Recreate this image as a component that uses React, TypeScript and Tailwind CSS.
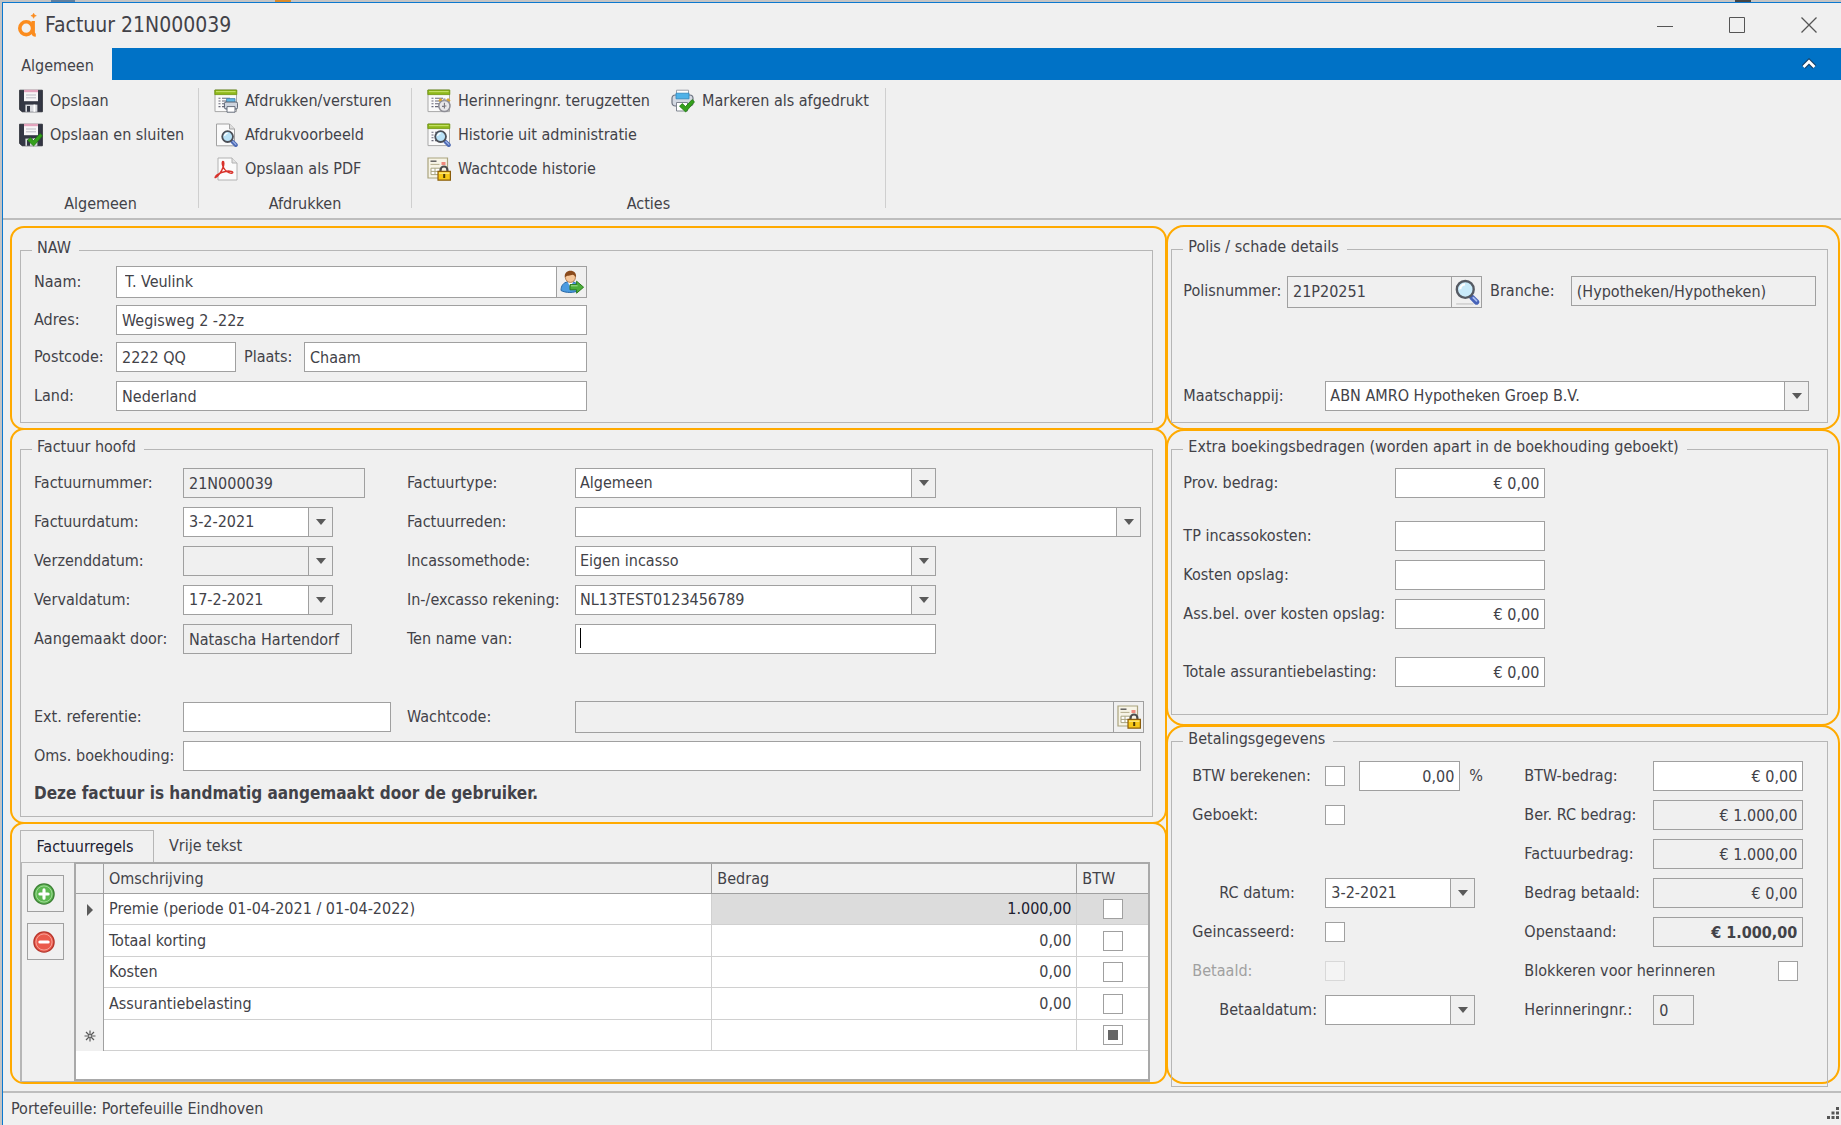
import { useId, type ReactNode } from "react";

/* ---------- icons ---------- */

function Svg({ children, size = "size-6" }: { children: ReactNode; size?: string }) {
  return (
    <svg viewBox="0 0 24 24" className={`${size} shrink-0`} fill="none" aria-hidden="true">
      {children}
    </svg>
  );
}

const CheckShape = () => (
  <path d="M8.5 17.2l2.8-2.6 3.2 3 6.6-7 2.4 2.2-8.8 10.2z" fill="#35a01c" stroke="#1f7a10" strokeWidth=".8" strokeLinejoin="round" />
);

const FloppyShape = () => (
  <>
    <path d="M.6 1.2h22.8v21.6H3L.6 20.4z" fill="#343744" stroke="#20222b" strokeWidth=".8" strokeLinejoin="round" />
    <path d="M5 .8h14v11.4H5z" fill="#f7f5f7" />
    <path d="M5 .8h14v2.4H5z" fill="#e3a3bd" />
    <path d="M7 6h10M7 8.8h10" stroke="#b9b9c2" strokeWidth="1" />
    <path d="M6.4 15.6h12v7.2h-12z" fill="#d9dadf" />
    <path d="M8 17h3v5.8H8z" fill="#343744" />
    <path d="M14.5 15.6h1.8v7.2h-1.8z" fill="#fff" />
  </>
);

const FormShape = () => (
  <>
    <path d="M1 1h21.5v21.6H1z" fill="#fafafa" stroke="#a7a7a7" />
    <path d="M.8 1h22v4.6H.8z" fill="#8fb81c" stroke="#6f9410" strokeWidth=".8" />
    <path d="M2 2.6h19.6" stroke="#c3df63" strokeWidth="1.2" />
    <path d="M4.5 9.2h2M8 9.2h8M4.5 12h2M8 12h5M4.5 14.8h2M8 14.8h5M4.5 17.6h2M8 17.6h5" stroke="#686878" strokeWidth="1.1" />
  </>
);

const LensShape = () => (
  <>
    <path d="M18.4 18.6l3.4 3.4" stroke="#4f6cb5" strokeWidth="4" strokeLinecap="round" />
    <path d="M18.8 18.4l3 3" stroke="#9db4e8" strokeWidth="1.2" strokeLinecap="round" />
    <circle cx="13.6" cy="13.6" r="5.4" fill="#b9e2f7" stroke="#4b4f57" strokeWidth="1.8" />
    <path d="M10.6 13a3 3 0 0 1 3-2.6" stroke="#fff" strokeWidth="1.2" />
  </>
);

const NoteLockShape = () => (
  <>
    <path d="M1 1h19.5v20H1z" fill="#f7f4e6" stroke="#aaa37e" strokeWidth="1.2" />
    <path d="M3.5 4.2h6" stroke="#555" strokeWidth="1.4" />
    <path d="M3.5 7.4h9" stroke="#b5ae8c" />
    <path d="M14.5 5h4v3h-4z" fill="#f0897c" />
    <path d="M4 11.2h9v6.4H4zM4 14.4h9M8 11.2v6.4" stroke="#a9a480" strokeWidth="1" fill="#fff" />
    <path d="M13.6 15.5v-2.6a3.4 3.4 0 0 1 6.8 0v2.6" stroke="#4c4c4c" strokeWidth="2.2" />
    <path d="M11 14.4h12.4v8.8H11z" fill="#f7c818" stroke="#8a5d0c" strokeWidth="1.2" />
    <path d="M12 16.2h10.4" stroke="#fdea8a" strokeWidth="1.2" />
    <path d="M17.2 17v4" stroke="#4c3a05" strokeWidth="2" />
  </>
);

const SaveIcon = () => <Svg><FloppyShape /></Svg>;
const SaveCloseIcon = () => <Svg><FloppyShape /><CheckShape /></Svg>;
const NoteLockIcon = () => <Svg><NoteLockShape /></Svg>;
const HistoryIcon = () => <Svg><FormShape /><LensShape /></Svg>;

const PrintSendIcon = () => (
  <Svg>
    <FormShape />
    <path d="M12.6 9.6h8.4v5h-8.4z" fill="#62b6e4" stroke="#3f7fa8" strokeWidth=".8" />
    <rect x="10.4" y="13" width="13.2" height="7" rx="1.6" fill="#cfd5df" stroke="#59616f" />
    <path d="M13 17.6h8v5.6h-8z" fill="#fff" stroke="#59616f" strokeWidth=".9" />
  </Svg>
);

const PreviewIcon = () => (
  <Svg>
    <path d="M2.5 1h13l5 5v16.8h-18z" fill="#fafafa" stroke="#a2a2a2" />
    <path d="M15.5 1v5h5" fill="#ddd" stroke="#a2a2a2" />
    <LensShape />
  </Svg>
);

const PdfIcon = () => (
  <Svg>
    <path d="M4 1h14l5 5v17H4z" fill="#fbfbfb" stroke="#b2b2b2" />
    <path d="M18 1v5h5" fill="#e3e3e3" stroke="#b2b2b2" />
    <path d="M1.4 20.6c2.6-1 6.2-6 7.8-10.6.8-2.6.9-5.4-.2-5.4-1.3 0-.8 4.6 1.6 7.8 2.2 2.8 6.8 4.8 8 3.4.9-1.3-2.6-2-6-1.6-4 .4-7.2 1.8-9.4 3.6-1.7 1.4-2.5 3-1.8 2.8z" stroke="#d8322b" strokeWidth="1.5" strokeLinejoin="round" />
  </Svg>
);

const ClockFormIcon = () => (
  <Svg>
    <FormShape />
    <path d="M14.5 10l-2 2.5M20 10l2.5 2.5" stroke="#d9a72e" strokeWidth="3" />
    <circle cx="17.4" cy="17" r="5.6" fill="#e8e8ea" stroke="#8e8e96" strokeWidth="1.5" />
    <path d="M17.4 13.8v3.6H15M17.4 17.4v2M17.4 17h2" stroke="#77777f" strokeWidth="1.1" />
    <circle cx="17.4" cy="10.6" r="1.3" fill="#a2a2a8" />
  </Svg>
);

const PrinterCheckIcon = () => (
  <Svg>
    <path d="M5.5 1.2h12v6h-12z" fill="#fff" stroke="#9a9fa8" />
    <rect x="1" y="6" width="21" height="11" rx="3.2" fill="#d4d9e2" stroke="#6d7481" strokeWidth="1.2" />
    <path d="M5 4.2h13v5.6H5z" fill="#4fb2e8" stroke="#2f86bb" strokeWidth=".8" />
    <path d="M5.5 13.5h11V22h-11z" fill="#fff" stroke="#7f8590" />
    <CheckShape />
  </Svg>
);

const MagnifierIcon = () => (
  <Svg size="size-[26px]">
    <path d="M2 23h16" stroke="#cfcfcf" strokeWidth="1.4" />
    <path d="M16.8 17.2l4 4" stroke="#4763b8" strokeWidth="5" strokeLinecap="round" />
    <path d="M17.8 17.2l3 3" stroke="#a9bdf0" strokeWidth="1.6" strokeLinecap="round" />
    <circle cx="10.4" cy="9.6" r="7.8" fill="#c9ebfb" stroke="#555a63" strokeWidth="2.2" />
    <path d="M5.8 9.4A4.6 4.6 0 0 1 10.2 5" stroke="#fff" strokeWidth="2" />
  </Svg>
);

const PersonIcon = () => (
  <Svg>
    <path d="M1 20.5c0-5 2.6-8 6.4-8.6H13c3.4.6 5.4 3.4 5.4 8.600-4 2.600-13 2.600-17.400 0z" fill="#4b9be0" stroke="#2667a6" />
    <path d="M7.6 12l2.8 5 2.8-5z" fill="#fff" />
    <circle cx="10.4" cy="7.4" r="5" fill="#f5c79b" stroke="#a86b38" strokeWidth=".8" />
    <path d="M4.8 7.6C4.2 3 7 .8 10.4.8c3.600 0 6.400 2.400 5.600 6.800-1.200-2-2.200-2.600-3.400-2.800-2.400 1-6 .4-7.800 2.800z" fill="#8a4a1c" />
    <path d="M10 14.6h6.600v-3.400l7 6-7 6v-3.400H10z" fill="#4cae3a" stroke="#2b7c1f" strokeLinejoin="round" />
    <path d="M11 15.8h6.600" stroke="#a4e096" />
  </Svg>
);

function RoundIcon({ plus }: { plus: boolean }) {
  return (
    <Svg size="size-[22px]">
      <circle cx="12" cy="12" r="11" fill={plus ? "#5db851" : "#ea5a4c"} stroke={plus ? "#3b7f34" : "#b6352b"} strokeWidth="1.5" />
      <circle cx="12" cy="12" r="8.8" stroke={plus ? "#a5dc9c" : "#f7a89f"} strokeWidth="1" />
      <path d={plus ? "M12 7.5v9M7.5 12h9" : "M7.5 12h9"} stroke="#fff" strokeWidth="3.4" strokeLinecap="round" />
    </Svg>
  );
}

const Logo = () => (
  <svg viewBox="0 0 20 24" className="h-6 w-5" fill="none" aria-hidden="true">
    <circle cx="8.2" cy="15.2" r="6.4" stroke="#fb8c1e" strokeWidth="3.6" />
    <path d="M15.2 8v11.5q0 2.6 2.6 2.6" stroke="#fb8c1e" strokeWidth="3.4" />
    <path d="M15.6.2l.9 1.800 1.800.7-1.800.8-.9 1.800-.9-1.800-1.800-.8 1.800-.7z" fill="#fb8c1e" stroke="#fb8c1e" strokeWidth=".6" />
  </svg>
);

const Triangle = () => (
  <svg viewBox="0 0 10 6" width="10" height="6" aria-hidden="true">
    <path d="M0 0h10L5 6z" fill="#5a5a5a" />
  </svg>
);

/* ---------- form pieces ---------- */

const Box = ({ children, className }: { children: ReactNode; className: string }) => (
  <div className={`flex flex-col border-2 border-[#ffaa00] ${className}`}>{children}</div>
);

function Group({ title, className, children }: { title: string; className: string; children: ReactNode }) {
  return (
    <fieldset className={`min-w-0 border border-[#b6b6b6] ${className}`}>
      <legend className="h-[26px] pr-2 pl-[5px] leading-[22px]">{title}</legend>
      {children}
    </fieldset>
  );
}

type TextProps = {
  id?: string;
  label?: string;
  value?: string;
  locked?: boolean;
  right?: boolean;
  className: string;
};

function Text({ id, label, value = "", locked, right, className }: TextProps) {
  return (
    <input
      id={id}
      aria-label={label}
      type="text"
      defaultValue={value}
      readOnly={locked}
      className={`h-[30px] min-w-0 rounded-none border border-[#a0a0a0] px-[5px] outline-none ${locked ? "bg-[#f0f0f0]" : "bg-white"} ${right ? "text-right" : ""} ${className}`}
    />
  );
}

function Drop({ id, value = "", className }: { id: string; value?: string; className: string }) {
  return (
    <div className={`relative h-[30px] border border-[#a0a0a0] bg-white ${className}`}>
      <select id={id} defaultValue={value} className="block h-full w-full appearance-none bg-transparent pr-6 pl-1 outline-none">
        <option value={value}>{value}</option>
      </select>
      <span className="pointer-events-none absolute inset-y-0 right-0 flex w-6 items-center justify-center border-l border-[#a0a0a0] bg-[#f0f0f0]">
        <Triangle />
      </span>
    </div>
  );
}

function DateBox({ id, value = "", locked }: { id: string; value?: string; locked?: boolean }) {
  return (
    <div className="flex h-[30px] w-[150px] border border-[#a0a0a0]">
      <input id={id} type="text" defaultValue={value} readOnly={locked} className={`min-w-0 flex-1 px-[5px] outline-none ${locked ? "bg-[#f0f0f0]" : "bg-white"}`} />
      <button type="button" aria-label="Kalender openen" className="flex w-6 items-center justify-center border-l border-[#a0a0a0] bg-[#f0f0f0]">
        <Triangle />
      </button>
    </div>
  );
}

type LookUpProps = {
  id: string;
  value?: string;
  locked?: boolean;
  icon: ReactNode;
  action: string;
  inputClass: string;
  className: string;
};

function LookUp({ id, value = "", locked, icon, action, inputClass, className }: LookUpProps) {
  return (
    <div className={`flex h-8 border border-[#a0a0a0] ${className}`}>
      <input id={id} type="text" defaultValue={value} readOnly={locked} className={`min-w-0 flex-1 outline-none ${locked ? "bg-[#f0f0f0]" : "bg-white"} ${inputClass}`} />
      <button type="button" aria-label={action} className="flex w-[30px] items-center justify-center border-l border-[#a0a0a0] bg-[#f0f0f0]">
        {icon}
      </button>
    </div>
  );
}

function Check({ id, label, disabled, filled }: { id?: string; label?: string; disabled?: boolean; filled?: boolean }) {
  return (
    <input
      id={id}
      aria-label={label}
      type="checkbox"
      disabled={disabled}
      className={`block size-5 shrink-0 appearance-none border ${disabled ? "border-[#d8d8d8] bg-[#f4f4f4]" : "border-[#a0a0a0]"} ${filled ? "bg-[#666] shadow-[inset_0_0_0_4px_#fff]" : disabled ? "" : "bg-white"}`}
    />
  );
}

/* ---------- ribbon ---------- */

const RibbonButton = ({ icon, children }: { icon: ReactNode; children: ReactNode }) => (
  <button type="button" className="flex h-6 items-center gap-[7px] whitespace-nowrap">
    {icon}
    {children}
  </button>
);

function RibbonGroup({ title, className, children }: { title: string; className: string; children: ReactNode }) {
  return (
    <>
      <section aria-label={title} className={`flex h-[126px] flex-col justify-between pt-px ${className}`}>
        {children}
        <h2 className="text-center leading-5">{title}</h2>
      </section>
      <div className="h-[120px] w-px bg-[#cfcfcf]" />
    </>
  );
}

/* ---------- panels ---------- */

function Naw() {
  const id = useId();
  return (
    <Box className="rounded-[14px] pt-[9px] pr-3 pb-[5px] pl-2">
      <Group title="NAW" className="px-[13px] pt-[3px] pb-[11px] [&>legend]:-ml-0.5">
        <div className="grid grid-cols-[82px_471px] items-center gap-y-[7px]">
          <label htmlFor={id + "n"}>Naam:</label>
          <LookUp id={id + "n"} value="T. Veulink" icon={<PersonIcon />} action="Relatie openen" inputClass="px-2" className="" />
          <label htmlFor={id + "a"}>Adres:</label>
          <Text id={id + "a"} value="Wegisweg 2 -22z" className="" />
          <label htmlFor={id + "p"}>Postcode:</label>
          <div className="flex items-center">
            <Text id={id + "p"} value="2222 QQ" className="w-[120px]" />
            <label htmlFor={id + "s"} className="w-[68px] pl-2">Plaats:</label>
            <Text id={id + "s"} value="Chaam" className="flex-1" />
          </div>
          <label htmlFor={id + "l"} className="mt-0.5">Land:</label>
          <Text id={id + "l"} value="Nederland" className="mt-0.5" />
        </div>
      </Group>
    </Box>
  );
}

function FactuurHoofd() {
  const id = useId();
  return (
    <Box className="-mt-0.5 rounded-[14px] pt-1.5 pr-3 pb-[5px] pl-2">
      <Group title="Factuur hoofd" className="pt-1.5 pr-[11px] pb-[11px] pl-[13px] [&>legend]:-ml-0.5">
        <div className="grid grid-cols-[149px_224px_168px_minmax(0,1fr)] items-center gap-y-[9px]">
          <label htmlFor={id + "1"}>Factuurnummer:</label>
          <Text id={id + "1"} value="21N000039" locked className="w-[182px]" />
          <label htmlFor={id + "2"}>Factuurtype:</label>
          <Drop id={id + "2"} value="Algemeen" className="w-[361px]" />

          <label htmlFor={id + "3"}>Factuurdatum:</label>
          <DateBox id={id + "3"} value="3-2-2021" />
          <label htmlFor={id + "4"}>Factuurreden:</label>
          <Drop id={id + "4"} className="" />

          <label htmlFor={id + "5"}>Verzenddatum:</label>
          <DateBox id={id + "5"} locked />
          <label htmlFor={id + "6"}>Incassomethode:</label>
          <Drop id={id + "6"} value="Eigen incasso" className="w-[361px]" />

          <label htmlFor={id + "7"}>Vervaldatum:</label>
          <DateBox id={id + "7"} value="17-2-2021" />
          <label htmlFor={id + "8"}>In-/excasso rekening:</label>
          <Drop id={id + "8"} value="NL13TEST0123456789" className="w-[361px]" />

          <label htmlFor={id + "9"}>Aangemaakt door:</label>
          <Text id={id + "9"} value="Natascha Hartendorf" locked className="w-[169px]" />
          <label htmlFor={id + "10"}>Ten name van:</label>
          <div className="relative w-[361px]">
            <Text id={id + "10"} className="block w-full" />
            <span className="absolute top-1 left-[5px] h-5 w-px bg-black" />
          </div>
        </div>
        <div className="mt-[47px] grid grid-cols-[149px_224px_168px_minmax(0,1fr)] items-center gap-y-2">
          <label htmlFor={id + "11"}>Ext. referentie:</label>
          <Text id={id + "11"} className="w-[208px]" />
          <label htmlFor={id + "12"}>Wachtcode:</label>
          <LookUp id={id + "12"} locked icon={<NoteLockIcon />} action="Wachtcode historie" inputClass="px-[5px]" className="-mr-[3px]" />
          <label htmlFor={id + "13"}>Oms. boekhouding:</label>
          <Text id={id + "13"} className="col-span-3" />
        </div>
        <p className="mt-2.5 text-[17px] leading-6 font-bold">Deze factuur is handmatig aangemaakt door de gebruiker.</p>
      </Group>
    </Box>
  );
}

const ROWS = [
  { text: "Premie (periode 01-04-2021 / 01-04-2022)", amount: "1.000,00", mark: "current" },
  { text: "Totaal korting", amount: "0,00", mark: "" },
  { text: "Kosten", amount: "0,00", mark: "" },
  { text: "Assurantiebelasting", amount: "0,00", mark: "" },
  { text: "", amount: "", mark: "new" },
];

function RowMark({ mark }: { mark: string }) {
  if (mark === "current")
    return (
      <svg viewBox="0 0 6 12" className="mx-auto h-3 w-1.5" role="img" aria-label="Huidige regel">
        <path d="M0 0l6 6-6 6z" fill="#5a5a5a" />
      </svg>
    );
  if (mark === "new")
    return (
      <svg viewBox="0 0 12 12" className="mx-auto size-3" role="img" aria-label="Nieuwe regel">
        <path d="M6 .5v11M.5 6h11M2 2l8 8M10 2l-8 8" stroke="#5a5a5a" strokeWidth="1.2" />
        <circle cx="6" cy="6" r="1" fill="#f0f0f0" />
      </svg>
    );
  return null;
}

function Regels() {
  return (
    <Box className="-mt-0.5 flex-1 rounded-[14px] pt-1.5 pr-[15px] pl-2">
      <div role="tablist" className="flex h-8">
        <button type="button" role="tab" aria-selected="true" className="w-[134px] border border-b-0 border-[#b6b6b6] pr-1 text-[#202030]">
          Factuurregels
        </button>
        <button type="button" role="tab" aria-selected="false" className="px-[15px]">Vrije tekst</button>
      </div>
      <div role="tabpanel" className="flex flex-1 border-b border-l-2 border-[#b6b6b6]">
        <div className="flex w-[52px] flex-col gap-[11px] border-t border-[#b6b6b6] pt-3 pl-[5px]">
          <button type="button" aria-label="Regel toevoegen" className="flex size-[37px] items-center justify-center border border-[#a0a0a0] pr-1">
            <RoundIcon plus />
          </button>
          <button type="button" aria-label="Regel verwijderen" className="flex size-[37px] items-center justify-center border border-[#a0a0a0] pr-1">
            <RoundIcon plus={false} />
          </button>
        </div>
        <div className="min-w-0 flex-1 border-2 border-[#a9a9a9] bg-white">
          <table className="w-full table-fixed border-separate border-spacing-0">
            <colgroup>
              <col className="w-7" />
              <col />
              <col className="w-[365px]" />
              <col className="w-[71px]" />
            </colgroup>
            <thead>
              <tr className="h-[30px] bg-[#f0f0f0] text-left">
                <td className="border-r border-b border-[#a0a0a0]" />
                <th className="border-r border-b border-[#a0a0a0] px-[5px] py-0 font-normal">Omschrijving</th>
                <th className="border-r border-b border-[#a0a0a0] px-[5px] py-0 font-normal">Bedrag</th>
                <th className="border-b border-[#a0a0a0] px-[5px] py-0 font-normal">BTW</th>
              </tr>
            </thead>
            <tbody>
              {ROWS.map((r, i) => (
                <tr key={i} className="h-[31px] leading-5 even:h-8">
                  <td className="border-r border-[#a0a0a0] bg-[#f0f0f0] p-0">
                    <RowMark mark={r.mark} />
                  </td>
                  <td className="border-r border-b border-[#d0d0d0] px-[5px] py-0">{r.text}</td>
                  <td className={`border-r border-b border-[#d0d0d0] px-[5px] py-0 text-right ${i === 0 ? "bg-[#dcdcdc] text-[#202030]" : ""}`}>{r.amount}</td>
                  <td className={`border-b border-[#d0d0d0] p-0 ${i === 0 ? "bg-[#dcdcdc]" : ""}`}>
                    <div className="flex justify-center">
                      <Check label={`BTW ${r.text}`} filled={r.mark === "new"} />
                    </div>
                  </td>
                </tr>
              ))}
            </tbody>
          </table>
        </div>
      </div>
    </Box>
  );
}

function Polis() {
  const id = useId();
  return (
    <Box className="rounded-[18px] pt-[9px] pr-2.5 pb-[5px] pl-[3px]">
      <Group title="Polis / schade details" className="px-[11px] pt-3.5 pb-[11px]">
        <div className="flex">
          <label htmlFor={id + "p"} className="w-[104px] leading-[30px]">Polisnummer:</label>
          <LookUp id={id + "p"} value="21P20251" locked icon={<MagnifierIcon />} action="Polis zoeken" inputClass="px-[5px]" className="w-[195px]" />
          <label htmlFor={id + "b"} className="w-[89px] pl-2 leading-[30px]">Branche:</label>
          <Text id={id + "b"} value="(Hypotheken/Hypotheken)" locked className="w-[246px]" />
        </div>
        <div className="mt-[73px] flex items-center">
          <label htmlFor={id + "m"} className="w-[142px]">Maatschappij:</label>
          <Drop id={id + "m"} value="ABN AMRO Hypotheken Groep B.V." className="w-[484px]" />
        </div>
      </Group>
    </Box>
  );
}

function Extra() {
  const id = useId();
  const rows = [
    { label: "Prov. bedrag:", value: "€ 0,00", gap: "" },
    { label: "TP incassokosten:", value: "", gap: "mt-[23px]" },
    { label: "Kosten opslag:", value: "", gap: "mt-[9px]" },
    { label: "Ass.bel. over kosten opslag:", value: "€ 0,00", gap: "mt-[9px]" },
    { label: "Totale assurantiebelasting:", value: "€ 0,00", gap: "mt-7" },
  ];
  return (
    <Box className="-mt-px rounded-[18px] pt-[5px] pr-2.5 pb-[9px] pl-[3px]">
      <Group title="Extra boekingsbedragen (worden apart in de boekhouding geboekt)" className="px-[11px] pt-1.5 pb-[27px]">
        {rows.map((r, i) => (
          <div key={r.label} className={`flex items-center ${r.gap}`}>
            <label htmlFor={id + i} className="w-[212px] whitespace-nowrap">{r.label}</label>
            <Text id={id + i} value={r.value} right className="w-[150px]" />
          </div>
        ))}
      </Group>
    </Box>
  );
}

function Betaling() {
  const id = useId();
  return (
    <Box className="-mt-px flex-1 rounded-[18px] pt-px pr-2.5 pl-[3px]">
      <Group title="Betalingsgegevens" className="-mb-[5px] flex-1 pt-[7px] pl-[11px]">
        <div className="ml-[9px] grid auto-rows-[30px] grid-cols-[133px_199px_129px_150px] items-center gap-y-[9px] whitespace-nowrap">
          <label htmlFor={id + "1"}>BTW berekenen:</label>
          <div className="flex items-center">
            <Check id={id + "1"} />
            <Text label="BTW percentage" value="0,00" right className="ml-3.5 w-[101px]" />
            <span className="pl-[9px]">%</span>
          </div>
          <label htmlFor={id + "2"}>BTW-bedrag:</label>
          <Text id={id + "2"} value="€ 0,00" right className="" />

          <label htmlFor={id + "3"}>Geboekt:</label>
          <Check id={id + "3"} />
          <label htmlFor={id + "4"}>Ber. RC bedrag:</label>
          <Text id={id + "4"} value="€ 1.000,00" locked right className="" />

          <label htmlFor={id + "5"} className="col-start-3">Factuurbedrag:</label>
          <Text id={id + "5"} value="€ 1.000,00" locked right className="" />

          <label htmlFor={id + "6"} className="pl-[27px]">RC datum:</label>
          <DateBox id={id + "6"} value="3-2-2021" />
          <label htmlFor={id + "7"}>Bedrag betaald:</label>
          <Text id={id + "7"} value="€ 0,00" locked right className="" />

          <label htmlFor={id + "8"}>Geincasseerd:</label>
          <Check id={id + "8"} />
          <label htmlFor={id + "9"}>Openstaand:</label>
          <Text id={id + "9"} value="€ 1.000,00" locked right className="font-bold" />

          <label htmlFor={id + "10"} className="text-[#a0a0a0]">Betaald:</label>
          <Check id={id + "10"} disabled />
          <div className="col-span-2 flex items-center justify-between pr-[5px]">
            <label htmlFor={id + "11"}>Blokkeren voor herinneren</label>
            <Check id={id + "11"} />
          </div>

          <label htmlFor={id + "12"} className="pl-[27px]">Betaaldatum:</label>
          <DateBox id={id + "12"} />
          <label htmlFor={id + "13"}>Herinneringnr.:</label>
          <Text id={id + "13"} value="0" locked className="w-[41px]" />
        </div>
      </Group>
    </Box>
  );
}

/* ---------- window ---------- */

export default function App() {
  return (
    <div className="flex min-h-screen flex-col bg-[#c4c4c4] pl-0.5 font-['DejaVu_Sans_Condensed','DejaVu_Sans',sans-serif] text-[16px] leading-5 text-[#424248]">
      <div className="flex h-0.5 justify-between">
        <span className="ml-[49px] w-6 bg-[#5f7f9f]" />
        <span className="mr-auto ml-[200px] w-4 bg-[#d98a2b]" />
        <span className="mr-[90px] w-4 bg-[#444]" />
      </div>
      <div className="flex flex-1 flex-col border-t border-l border-[#0b78cf] bg-[#f0f0f0]">
        <header className="flex h-[45px] items-center justify-between pl-[15px]">
          <div className="flex items-center gap-[7px] pb-0.5">
            <Logo />
            <h1 className="text-[21px] leading-7">Factuur 21N000039</h1>
          </div>
          <div className="flex gap-2 self-stretch pb-0.5">
            <button type="button" aria-label="Minimaliseren" className="flex w-16 items-center justify-center">
              <svg viewBox="0 0 16 16" className="size-4"><path d="M0 9.5h16" stroke="#555" /></svg>
            </button>
            <button type="button" aria-label="Maximaliseren" className="flex w-16 items-center justify-center">
              <svg viewBox="0 0 16 16" className="size-4"><path d="M.5.5h15v15H.5z" stroke="#555" fill="none" /></svg>
            </button>
            <button type="button" aria-label="Sluiten" className="flex w-16 items-center justify-center">
              <svg viewBox="0 0 16 16" className="size-4"><path d="M.5.5l15 15M15.5.5l-15 15" stroke="#555" strokeWidth="1.3" /></svg>
            </button>
          </div>
        </header>

        <nav className="flex h-8 bg-[#0072c6]">
          <button type="button" className="w-[109px] bg-[#f0f0f0] pt-1 text-center">Algemeen</button>
          <button type="button" aria-label="Lint samenvouwen" className="ml-auto flex w-16 items-center justify-center">
            <svg viewBox="0 0 16 12" className="h-3 w-4" fill="none">
              <path d="M2.5 9L8 3.5 13.5 9" stroke="#173f66" strokeWidth="5" />
              <path d="M2.5 9L8 3.5 13.5 9" stroke="#fff" strokeWidth="2.8" />
            </svg>
          </button>
        </nav>

        <div className="flex border-b-2 border-[#bdbdbd] pt-2 pb-1">
          <RibbonGroup title="Algemeen" className="w-[195px]">
            <div className="flex flex-col gap-2.5 pl-4">
              <RibbonButton icon={<SaveIcon />}>Opslaan</RibbonButton>
              <RibbonButton icon={<SaveCloseIcon />}>Opslaan en sluiten</RibbonButton>
            </div>
          </RibbonGroup>
          <RibbonGroup title="Afdrukken" className="w-[212px]">
            <div className="flex flex-col gap-2.5 pl-[15px]">
              <RibbonButton icon={<PrintSendIcon />}>Afdrukken/versturen</RibbonButton>
              <RibbonButton icon={<PreviewIcon />}>Afdrukvoorbeeld</RibbonButton>
              <RibbonButton icon={<PdfIcon />}>Opslaan als PDF</RibbonButton>
            </div>
          </RibbonGroup>
          <RibbonGroup title="Acties" className="w-[473px]">
            <div className="grid grid-cols-[244px_auto] gap-y-2.5 pl-[15px]">
              <RibbonButton icon={<ClockFormIcon />}>Herinneringnr. terugzetten</RibbonButton>
              <RibbonButton icon={<PrinterCheckIcon />}>Markeren als afgedrukt</RibbonButton>
              <RibbonButton icon={<HistoryIcon />}>Historie uit administratie</RibbonButton>
              <span />
              <RibbonButton icon={<NoteLockIcon />}>Wachtcode historie</RibbonButton>
            </div>
          </RibbonGroup>
        </div>

        <main className="grid flex-1 grid-cols-[1158fr_673fr] pr-px pb-[7px] pl-[7px]">
          <div className="flex min-w-0 flex-col pt-1.5">
            <Naw />
            <FactuurHoofd />
            <Regels />
          </div>
          <div className="-ml-px flex min-w-0 flex-col pt-[5px]">
            <Polis />
            <Extra />
            <Betaling />
          </div>
        </main>

        <footer className="flex h-[34px] items-center justify-between border-t-2 border-[#bdbdbd] pr-0.5 pl-2">
          <span>Portefeuille: Portefeuille Eindhoven</span>
          <svg viewBox="0 0 12 12" className="mt-2 size-3" aria-hidden="true">
            <path d="M9 0h3v3H9zM9 4.5h3v3H9zM4.5 4.5h3v3h-3zM9 9h3v3H9zM4.5 9h3v3h-3zM0 9h3v3H0z" fill="#555" />
          </svg>
        </footer>
      </div>
    </div>
  );
}
